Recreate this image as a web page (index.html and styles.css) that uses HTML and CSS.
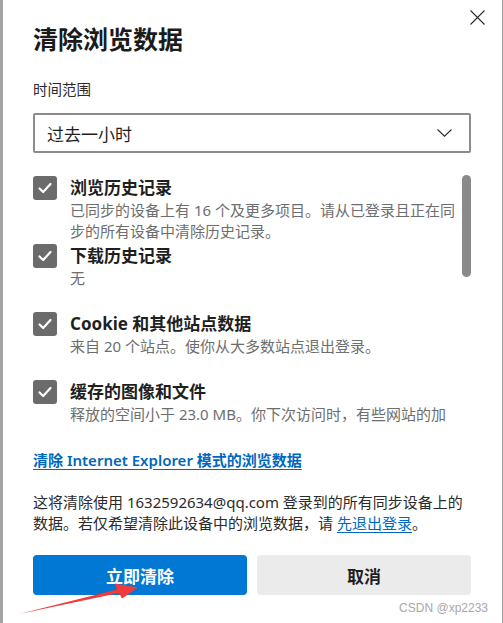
FILE: index.html
```html
<!DOCTYPE html>
<html lang="zh-CN">
<head>
    <meta charset="UTF-8">
    <title>清除浏览数据</title>
    <link rel="stylesheet" href="styles.css">
</head>
<body>
    <div class="dialog">
        <div class="header">
            <h1 class="title">清除浏览数据</h1>
            <button class="close" aria-label="关闭">
                <svg width="15" height="15" viewBox="0 0 15 15"><path d="M0.5 0.5 L14.5 14.5 M14.5 0.5 L0.5 14.5" stroke="#2b2b2b" stroke-width="1.1" fill="none"/></svg>
            </button>
        </div>

        <div class="field-label">时间范围</div>
        <div class="select">
            <span>过去一小时</span>
            <svg width="15" height="8" viewBox="0 0 15 8"><path d="M0.5 0.5 L7.5 7.2 L14.5 0.5" stroke="#2b2b2b" stroke-width="1.1" fill="none"/></svg>
        </div>

        <div class="options">
            <div class="option">
                <span class="checkbox"><svg width="24" height="24" viewBox="0 0 24 24"><path d="M6.5 12.5 L10.2 16 L17.5 8" stroke="#fff" stroke-width="2.2" fill="none" stroke-linecap="round" stroke-linejoin="round"/></svg></span>
                <div class="option-text">
                    <div class="option-title">浏览历史记录</div>
                    <div class="option-desc">已同步的设备上有 16 个及更多项目。请从已登录且正在同步的所有设备中清除历史记录。</div>
                </div>
            </div>
            <div class="option">
                <span class="checkbox"><svg width="24" height="24" viewBox="0 0 24 24"><path d="M6.5 12.5 L10.2 16 L17.5 8" stroke="#fff" stroke-width="2.2" fill="none" stroke-linecap="round" stroke-linejoin="round"/></svg></span>
                <div class="option-text">
                    <div class="option-title">下载历史记录</div>
                    <div class="option-desc">无</div>
                </div>
            </div>
            <div class="option">
                <span class="checkbox"><svg width="24" height="24" viewBox="0 0 24 24"><path d="M6.5 12.5 L10.2 16 L17.5 8" stroke="#fff" stroke-width="2.2" fill="none" stroke-linecap="round" stroke-linejoin="round"/></svg></span>
                <div class="option-text">
                    <div class="option-title">Cookie 和其他站点数据</div>
                    <div class="option-desc">来自 20 个站点。使你从大多数站点退出登录。</div>
                </div>
            </div>
            <div class="option">
                <span class="checkbox"><svg width="24" height="24" viewBox="0 0 24 24"><path d="M6.5 12.5 L10.2 16 L17.5 8" stroke="#fff" stroke-width="2.2" fill="none" stroke-linecap="round" stroke-linejoin="round"/></svg></span>
                <div class="option-text">
                    <div class="option-title">缓存的图像和文件</div>
                    <div class="option-desc">释放的空间小于 23.0 MB。你下次访问时，有些网站的加载速度可能会变慢。</div>
                </div>
            </div>
            <div class="scrollbar"></div>
        </div>

        <div class="ie-row"><a href="#" class="ie-link">清除 Internet Explorer 模式的浏览数据</a></div>

        <p class="note">这将清除使用 1632592634@qq.com 登录到的所有同步设备上的数据。若仅希望清除此设备中的浏览数据，请&nbsp;<a href="#">先退出登录</a>。</p>

        <div class="actions">
            <button class="btn primary">立即清除</button>
            <button class="btn secondary">取消</button>
        </div>
    </div>

    <svg class="arrow" width="503" height="623" viewBox="0 0 503 623">
        <polygon points="19,614 117,589.5 115,583.5 138,587.5 122,598.5 119,593" fill="#f23a3a"/>
    </svg>
    <span class="watermark">CSDN @xp2233</span>
</body>
</html>
```

FILE: styles.css
```css
* {
    box-sizing: border-box;
}

html, body {
    margin: 0;
    padding: 0;
}

body {
    position: relative;
    width: 503px;
    height: 623px;
    overflow: hidden;
    background: #ffffff;
    border-left: 3px solid #a3a3a3;
    border-right: 1px solid #a0a0a0;
    font-family: "Noto Sans", "Noto Sans CJK SC", sans-serif;
    color: #1f1f1f;
}

.dialog {
    padding: 10px 31px 0 30px;
}

.header {
    display: flex;
    justify-content: space-between;
    align-items: flex-start;
}

.title {
    margin: 12px 0 0;
    font-size: 25px;
    line-height: 34px;
    font-weight: 700;
    color: #1b1b1b;
}

.close {
    margin-right: -14px;
    padding: 0;
    width: 15px;
    height: 15px;
    border: 0;
    background: none;
    display: flex;
}

.field-label {
    margin-top: 23px;
    font-size: 14.5px;
    line-height: 20px;
    color: #2b2b2b;
}

.select {
    margin-top: 14px;
    height: 40px;
    border: 2px solid #8c8c8c;
    border-radius: 2px;
    padding: 0 17px 0 12px;
    display: flex;
    align-items: center;
    justify-content: space-between;
    font-size: 17px;
    color: #1f1f1f;
}

.options {
    position: relative;
    margin-top: 12px;
    padding-top: 11px;
    height: 261px;
    overflow: hidden;
}

.option {
    display: flex;
    gap: 13px;
    height: 68px;
    padding-right: 15px;
}

.checkbox {
    flex: none;
    width: 24px;
    height: 24px;
    border-radius: 3px;
    background: #6b6b6b;
    display: flex;
}

.option-title {
    font-size: 17px;
    line-height: 24px;
    font-weight: 700;
    color: #1f1f1f;
}

.option-desc {
    font-size: 15px;
    line-height: 21px;
    color: #6e6e6e;
}

.scrollbar {
    position: absolute;
    top: 10px;
    right: 0;
    width: 9px;
    height: 102px;
    border-radius: 5px;
    background: #8a8a8a;
}

.ie-row {
    margin-top: 24px;
    line-height: 21px;
}

.ie-link {
    font-size: 15px;
    font-weight: 600;
    color: #0067c0;
    text-decoration: underline;
    text-underline-offset: 3px;
}

.note {
    margin: 21px 0 0;
    font-size: 15px;
    line-height: 21px;
    color: #2b2b2b;
}

.note a {
    color: #0067c0;
    text-decoration: underline;
    text-underline-offset: 3px;
}

.actions {
    margin-top: 21px;
    display: grid;
    grid-template-columns: 1fr 1fr;
    gap: 10px;
}

.btn {
    height: 40px;
    border: 0;
    border-radius: 4px;
    font-family: inherit;
    font-size: 17px;
    font-weight: 700;
}

.primary {
    background: #0078d4;
    color: #ffffff;
}

.secondary {
    background: #ebebeb;
    color: #1f1f1f;
}

.arrow {
    position: absolute;
    left: -3px;
    top: 0;
    pointer-events: none;
}

.watermark {
    position: absolute;
    right: 14px;
    bottom: 8px;
    font-family: "Liberation Sans", sans-serif;
    font-size: 12px;
    color: #a8a8a8;
}
```
